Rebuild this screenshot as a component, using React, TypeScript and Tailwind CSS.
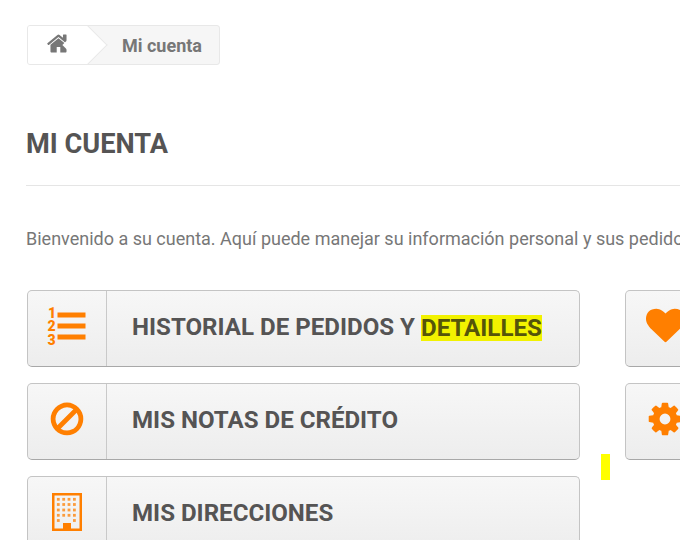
import type { ReactNode } from "react";

// font-awesome 4 glyphs, the v5 ones in react-icons have other shapes
const homePath =
  "M1472 992v480q0 26-19 45t-45 19h-384v-384h-256v384h-384q-26 0-45-19t-19-45v-480q0-1 .5-3t.5-3l575-474 575 474q1 2 1 6zm223-69l-62 74q-8 9-21 11h-3q-13 0-21-7l-692-577-692 577q-12 8-24 7-13-2-21-11l-62-74q-8-10-7-23.500t11-21.500l719-599q32-26 76-26t76 26l244 204v-195q0-14 9-23t23-9h192q14 0 23 9t9 23v408l219 182q10 8 11 21.500t-7 23.500z";
const banPath =
  "M1440 893q0-161-87-295l-754 753q137 89 297 89 111 0 211.500-43.500t173.500-116.500 116-174.500 43-212.500zm-999 299l755-754q-135-91-300-91-148 0-273 73t-198 199-73 274q0 162 89 299zm1223-299q0 157-61 300t-163.500 246-245 164-298.500 61-298.500-61-245-164-163.500-246-61-300 61-299.500 163.500-245.500 245-164 298.500-61 298.500 61 245 164 163.500 245.500 61 299.500z";
const heartPath =
  "M896 1664q-26 0-44-18l-624-602q-10-8-27.500-26t-55.500-65.500-68-97.500-53.500-121-23.500-138q0-220 127-344t351-124q62 0 126.500 21.500t120 58 95.500 68.500 76 68q36-36 76-68t95.500-68.500 120-58 126.500-21.500q224 0 351 124t127 344q0 221-229 450l-623 600q-18 18-44 18z";
const cogPath =
  "M1152 896q0-106-75-181t-181-75-181 75-75 181 75 181 181 75 181-75 75-181zm512-109v222q0 12-8 23t-20 13l-185 28q-19 54-39 91 35 50 107 138 10 12 10 25t-9 23q-27 37-99 108t-94 71q-12 0-26-9l-138-108q-44 23-91 38-16 136-29 186-7 28-36 28h-222q-14 0-24.500-8.500t-11.500-21.500l-28-184q-49-16-90-37l-141 107q-10 9-25 9-14 0-25-11-126-114-165-168-7-10-7-23 0-12 8-23 15-21 51-66.500t54-70.500q-27-50-41-99l-183-27q-13-2-21-12.500t-8-23.500v-222q0-12 8-23t19-13l186-28q14-46 39-92-40-57-107-138-10-12-10-24 0-10 9-23 26-36 98.500-107.500t94.500-71.500q13 0 26 10l138 107q44-23 91-38 16-136 29-186 7-28 36-28h222q14 0 24.500 8.500t11.500 21.500l28 184q49 16 90 37l142-107q9-9 24-9 13 0 25 10 129 119 165 170 7 8 7 22 0 12-8 23-15 21-51 66.500t-54 70.500q26 50 41 98l183 28q13 2 22 12.500t9 23.500z";

function Glyph({ d, size }: { d: string; size: number }) {
  return (
    <svg width={size} height={size} viewBox="0 0 1792 1792" fill="currentColor">
      <path d={d} />
    </svg>
  );
}

function ListIcon() {
  return (
    <svg width="40" height="40" viewBox="0 0 40 40">
      <g fill="currentColor" fontFamily="Roboto, sans-serif" fontWeight="900" fontSize="14">
        <text x="1" y="11.5">1</text>
        <text x="0.5" y="24.5">2</text>
        <text x="0.5" y="38.5">3</text>
        <rect x="10.5" y="6.5" width="28" height="5" />
        <rect x="10.5" y="17.5" width="28" height="5" />
        <rect x="10.5" y="28.5" width="28" height="5" />
      </g>
    </svg>
  );
}

function BuildingIcon() {
  const rows = [6.3, 11.5, 17, 22.3, 27.5];
  const cols = [6.3, 11.7, 17, 22.4];
  return (
    <svg width="30" height="38" viewBox="0 0 30 38">
      <rect x="1.25" y="1.25" width="27.5" height="35.5" fill="none" stroke="currentColor" strokeWidth="2.5" />
      <g fill="currentColor" opacity="0.75">
        {rows.map((y) =>
          cols.map((x) =>
            y === 27.5 && x > 7 && x < 22 ? null : (
              <rect key={`${x}-${y}`} x={x - 1.4} y={y - 1.4} width="2.8" height="2.8" />
            )
          )
        )}
      </g>
      <rect x="11" y="30" width="8" height="7" fill="currentColor" />
    </svg>
  );
}

function AccountButton({ icon, children, narrow }: { icon: ReactNode; children?: ReactNode; narrow?: boolean }) {
  return (
    <a
      className={`flex h-[77px] shrink-0 rounded-[5px] border border-[#c4c4c4] border-b-[#a8a8a8] bg-gradient-to-b from-[#f7f7f7] to-[#ededed] ${
        narrow ? "w-[200px]" : "w-[553px]"
      }`}
    >
      <span className="flex w-[79px] shrink-0 items-center justify-center border-r border-[#c9c9c9] pb-[6px] text-[#ff7f00]">
        {icon}
      </span>
      <span className="flex items-center pb-[2px] pl-[25px] text-[24.1px] font-bold whitespace-nowrap text-[#555454]">
        {children}
      </span>
    </a>
  );
}

export default function App() {
  return (
    <div className="relative h-[540px] w-[680px] overflow-hidden bg-white font-['Roboto',sans-serif] text-[#555454]">
      <div className="pt-[25px] pl-[27px]">
        {/* Breadcrumb */}
        <div className="flex h-[40px] w-[193px] overflow-hidden rounded-[3px] border border-[#e8e8e8] bg-[#f6f6f6]">
          <span className="relative flex w-[58px] shrink-0 items-center justify-center bg-white pb-[3px] pl-[3px] text-[#777777]">
            <Glyph d={homePath} size={25} />
            <span className="absolute top-[3px] right-[-15px] h-[32px] w-[32px] rotate-45 border-t border-r border-[#e8e8e8] bg-white" />
          </span>
          <span className="flex items-center pl-[36px] text-[18px] font-bold whitespace-nowrap text-[#777777]">
            Mi cuenta
          </span>
        </div>
      </div>

      <div className="pl-[26px]">
        <h1 className="mt-[61px] text-[27.2px] leading-[36px] font-bold">MI CUENTA</h1>
        <div className="mt-[23px] h-px bg-[#e5e5e5]" />
        <p className="mt-[41px] text-[18px] leading-[24px] whitespace-nowrap text-[#777777]">
          Bienvenido a su cuenta. Aquí puede manejar su información personal y sus pedidos.
        </p>

        <div className="mt-[39px] flex gap-[45px] pl-px">
          <div className="flex flex-col gap-[16px]">
            <AccountButton icon={<ListIcon />}>
              HISTORIAL DE PEDIDOS Y&nbsp;
              <span className="bg-[#f2f200] leading-[26px] text-[#55550a]">DETAILLES</span>
            </AccountButton>
            <AccountButton icon={<Glyph d={banPath} size={38} />}>MIS NOTAS DE CRÉDITO</AccountButton>
            <AccountButton icon={<BuildingIcon />}>MIS DIRECCIONES</AccountButton>
          </div>
          <div className="flex flex-col gap-[16px]">
            <AccountButton narrow icon={<Glyph d={heartPath} size={39} />} />
            <AccountButton narrow icon={<Glyph d={cogPath} size={38} />} />
          </div>
        </div>
      </div>

      <span className="absolute top-[454px] left-[601px] h-[26px] w-[9px] bg-[#ffff00]" />
    </div>
  );
}
